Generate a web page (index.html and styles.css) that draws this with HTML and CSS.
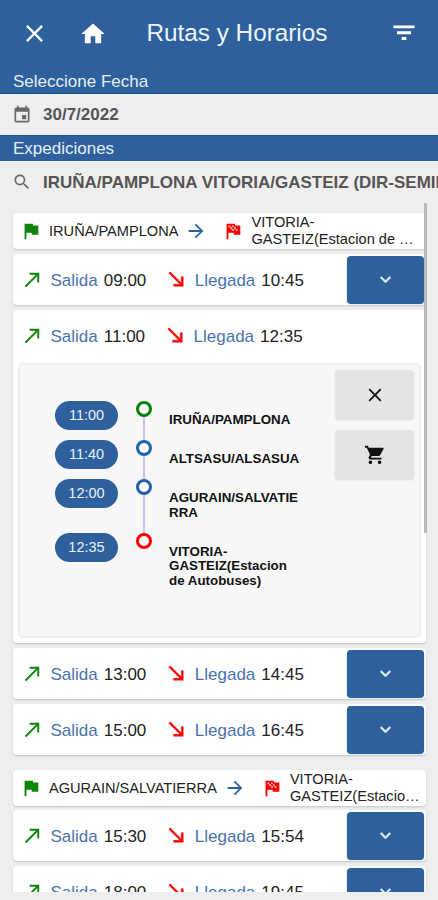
FILE: index.html
```
<!DOCTYPE html>
<html lang="es">
<head>
<meta charset="utf-8">
<title>Rutas y Horarios</title>
<link rel="stylesheet" href="styles.css">
</head>
<body>
<svg class="defs" width="0" height="0">
  <symbol id="close" viewBox="0 0 24 24"><path d="M19 6.4 17.6 5 12 10.6 6.4 5 5 6.4 10.6 12 5 17.6 6.4 19 12 13.4 17.6 19 19 17.6 13.4 12z"/></symbol>
  <symbol id="home" viewBox="0 0 24 24"><path d="M10 20v-6h4v6h5v-8h3L12 3 2 12h3v8z"/></symbol>
  <symbol id="filter" viewBox="0 0 24 24"><path d="M10 18h4v-2.500h-4v2.500zM3 5.500V8h18V5.500H3zm3 7.500h12v-2.500H6v2.500z"/></symbol>
  <symbol id="event" viewBox="0 0 24 24"><path d="M17 12h-5v5h5v-5zM16 1v2H8V1H6v2H5c-1.100 0-2 .9-2 2v14c0 1.100.9 2 2 2h14c1.100 0 2-.9 2-2V5c0-1.100-.9-2-2-2h-1V1h-2zm3 18H5V8h14v11z"/></symbol>
  <symbol id="search" viewBox="0 0 24 24"><path d="M15.500 14h-.8l-.3-.3A6.500 6.500 0 1 0 13.700 14.400l.3.3v.8l5 5 1.500-1.500-5-5zm-6 0a4.500 4.500 0 1 1 0-9 4.500 4.500 0 0 1 0 9z"/></symbol>
  <symbol id="flag" viewBox="0 0 24 24"><path d="M14.400 6 14 4H5v17h2v-7h5.600l.4 2h7V6z"/></symbol>
  <symbol id="goal" viewBox="0 0 24 24"><path d="M14.400 6 14 4H5v17h2v-7h5.600l.4 2h7V6z"/><path d="M7 6h2v2H7zM11 6h2v2h-2zM9 8h2v2H9zM13 8h2v2h-2zM11 10h2v2h-2zM15 10h2v2h-2z" fill="#fff" opacity=".7"/></symbol>
  <symbol id="arrow" viewBox="0 0 24 24"><path d="m12 4-1.400 1.400L16.200 11H4v2h12.200l-5.600 5.600L12 20l8-8z"/></symbol>
  <symbol id="out" viewBox="0 0 24 24"><path d="M9 5v2h6.600L4 18.600 5.400 20 17 8.400V15h2V5z"/></symbol>
  <symbol id="in" viewBox="0 0 24 24"><path d="M19 9h-2v6.600L5.400 4 4 5.400 15.600 17H9v2h10z"/></symbol>
  <symbol id="down" viewBox="0 0 24 24"><path d="M7.400 8.600 12 13.200l4.600-4.600L18 10l-6 6-6-6z"/></symbol>
  <symbol id="cart" viewBox="0 0 24 24"><path d="M7 18a2 2 0 1 0 0 4 2 2 0 0 0 0-4zM1 2v2h2l3.600 7.600-1.400 2.400C4.500 15.400 5.500 17 7 17h12v-2H7.400l1.100-2h7.500c.7 0 1.400-.4 1.700-1L21.300 5.500c.4-.7-.1-1.500-.9-1.500H5.200l-.9-2zM17 18a2 2 0 1 0 0 4 2 2 0 0 0 0-4z"/></symbol>
</svg>
<div class="app">
  <header class="topbar">
    <svg class="icon x"><use href="#close"/></svg>
    <svg class="icon home"><use href="#home"/></svg>
    <h1>Rutas y Horarios</h1>
    <svg class="icon filter"><use href="#filter"/></svg>
  </header>
  <div class="label first">Seleccione Fecha</div>
  <div class="field date"><svg class="icon"><use href="#event"/></svg><span>30/7/2022</span></div>
  <div class="label second">Expediciones</div>
  <div class="field"><svg class="icon"><use href="#search"/></svg><span>IRUÑA/PAMPLONA VITORIA/GASTEIZ (DIR-SEMIDIRECTO)</span></div>
  <main class="list">
    <div class="scroll"></div>
    <section class="group">
      <div class="card route"><svg class="icon green"><use href="#flag"/></svg><span class="from">IRUÑA/PAMPLONA</span><svg class="icon blue"><use href="#arrow"/></svg><svg class="icon red goal"><use href="#goal"/></svg><span class="to"><span>VITORIA-</span><span>GASTEIZ(Estacion de …</span></span></div>
      <div class="card trip"><svg class="icon green"><use href="#out"/></svg><b>Salida</b><time>09:00</time><svg class="icon red"><use href="#in"/></svg><b>Llegada</b><time>10:45</time><button><svg class="icon"><use href="#down"/></svg></button></div>
      <div class="card open">
        <div class="trip"><svg class="icon green"><use href="#out"/></svg><b>Salida</b><time>11:00</time><svg class="icon red"><use href="#in"/></svg><b>Llegada</b><time>12:35</time></div>
        <div class="panel">
          <ol class="stops">
            <li><span class="pill">11:00</span><i class="dot start"></i><strong>IRUÑA/PAMPLONA</strong></li>
            <li><span class="pill">11:40</span><i class="dot"></i><strong>ALTSASU/ALSASUA</strong></li>
            <li><span class="pill">12:00</span><i class="dot"></i><strong>AGURAIN/SALVATIE<br>RRA</strong></li>
            <li><span class="pill">12:35</span><i class="dot end"></i><strong>VITORIA-<br>GASTEIZ(Estacion<br>de Autobuses)</strong></li>
          </ol>
          <div class="actions">
            <button><svg class="icon"><use href="#close"/></svg></button>
            <button><svg class="icon cart"><use href="#cart"/></svg></button>
          </div>
        </div>
      </div>
      <div class="card trip"><svg class="icon green"><use href="#out"/></svg><b>Salida</b><time>13:00</time><svg class="icon red"><use href="#in"/></svg><b>Llegada</b><time>14:45</time><button><svg class="icon"><use href="#down"/></svg></button></div>
      <div class="card trip"><svg class="icon green"><use href="#out"/></svg><b>Salida</b><time>15:00</time><svg class="icon red"><use href="#in"/></svg><b>Llegada</b><time>16:45</time><button><svg class="icon"><use href="#down"/></svg></button></div>
    </section>
    <section class="group next">
      <div class="card route"><svg class="icon green"><use href="#flag"/></svg><span class="from">AGURAIN/SALVATIERRA</span><svg class="icon blue"><use href="#arrow"/></svg><svg class="icon red goal"><use href="#goal"/></svg><span class="to"><span>VITORIA-</span><span>GASTEIZ(Estacio…</span></span></div>
      <div class="card trip"><svg class="icon green"><use href="#out"/></svg><b>Salida</b><time>15:30</time><svg class="icon red"><use href="#in"/></svg><b>Llegada</b><time>15:54</time><button><svg class="icon"><use href="#down"/></svg></button></div>
      <div class="card trip"><svg class="icon green"><use href="#out"/></svg><b>Salida</b><time>18:00</time><svg class="icon red"><use href="#in"/></svg><b>Llegada</b><time>19:45</time><button><svg class="icon"><use href="#down"/></svg></button></div>
    </section>
  </main>
</div>
</body>
</html>
```
FILE: styles.css
```
* { box-sizing: border-box; }
body { margin: 0; background: #eee; font-family: "Liberation Sans", Arial, sans-serif; color: #222; }
.defs { display: block; position: absolute; }
.app { width: 438px; height: 900px; display: flex; flex-direction: column; overflow: hidden; }
.icon { width: 22px; height: 22px; fill: currentColor; flex: none; display: block; }
.green { color: #0a860a; }
.red { color: #f00; }
.blue { color: #2e609e; }

.topbar { height: 69px; flex: none; background: #2e609e; color: #fff; display: flex; align-items: center; padding: 0 20px; }
.topbar h1 { margin: -3px 0 0; font-size: 24.300px; font-weight: 400; line-height: 28px; color: #eef5ff; }
.topbar .x { width: 29px; height: 29px; margin-top: -2px; }
.topbar .home { width: 28px; height: 28px; margin: -2px 39.500px 0 30px; }
.topbar .filter { width: 28px; height: 28px; margin: -3px 0 0 auto; }
.label { flex: none; background: #2e609e; color: #e6effb; font-size: 17px; padding-left: 13px; white-space: nowrap; }
.first { height: 25px; line-height: 25px; border-bottom: 1px solid #0f5296; }
.second { height: 26px; line-height: 26px; border-top: 1px solid #0f5296; }
.field { height: 42px; flex: none; display: flex; align-items: center; gap: 11px; padding-left: 12px; color: #686868; font-size: 17px; font-weight: 700; white-space: nowrap; overflow: hidden; }
.field .icon { width: 20px; height: 20px; }
.field span { color: #555; padding-top: 1px; }
.date { height: 41px; }

.list { position: relative; height: 689px; flex: none; overflow: hidden; padding: 10px 12px 0 13px; }
.scroll { position: absolute; z-index: 2; left: 424px; top: 0; width: 3px; height: 330px; background: #b9b9b9; }
.group { display: flex; flex-direction: column; gap: 5px; margin-bottom: 15px; }
.card { background: #fff; border-radius: 4px; box-shadow: 0 1px 2px rgba(0,0,0,.18); }
.route { height: 36px; display: flex; align-items: center; padding-left: 7px; font-size: 14.600px; white-space: nowrap; }
.next .route { margin-bottom: -1px; }
.route .icon { margin-top: -1px; }
.from { margin: 0 7px 0 7px; }
.route .goal { margin: -1px 7px 0 15px; }
.to { display: flex; flex-direction: column; line-height: 17px; }
.trip { height: 51px; display: flex; align-items: center; padding-left: 8px; font-size: 17px; }
.trip > .icon { width: 23px; height: 23px; margin-top: -1px; }
.trip > .red { stroke: currentColor; stroke-width: .5px; }
.trip b { color: #4a72ae; font-weight: 400; margin: 2px 6px 0 6.500px; }
.trip time { margin: 2px 19px 0 0; }
.trip button { width: 77px; height: 47px; margin: 0 2px 0 auto; background: #2e609e; color: #e2edfa; box-shadow: 0 1px 1px #0f5296; }
button { border: 0; padding: 0; border-radius: 4px; display: flex; align-items: center; justify-content: center; font: inherit; }
.trip button .icon { width: 21px; height: 21px; stroke: currentColor; stroke-width: .6px; }

.open { height: 333px; padding: 0 5px; }
.open .trip { height: 53px; padding: 0 0 1px 3px; }
.panel { height: 275px; background: #f8f8f8; border: 2px solid #efefef; border-radius: 5px; display: flex; justify-content: space-between; padding: 5px 5px 0 35px; }
.stops { list-style: none; margin: 31px 0 0; padding: 0; }
.stops li { position: relative; display: flex; align-items: flex-start; }
.stops li:not(:last-child)::before { content: ""; position: absolute; left: 88px; top: 8px; width: 2px; height: 100%; background: #c3c5ee; }
.pill { width: 63px; height: 29px; border-radius: 15px; background: #2e609e; color: #eaf2fc; font-size: 14.500px; line-height: 29px; text-align: center; }
.dot { position: relative; width: 16px; height: 16px; margin: 0 18px 0 17.500px; border: 3px solid #2060a4; border-radius: 50%; background: #fff; }
.dot.start { border-color: #078007; }
.dot.end { border-color: #f00; }
.stops strong { color: #111; font-size: 13.350px; line-height: 14.600px; padding: 12px 0 12.400px; margin-left: -.5px; }
.actions { display: flex; flex-direction: column; gap: 11px; }
.actions button { width: 79px; height: 49px; background: #e4e4e4; color: #111; box-shadow: 0 1px 2px rgba(0,0,0,.12); }
```
